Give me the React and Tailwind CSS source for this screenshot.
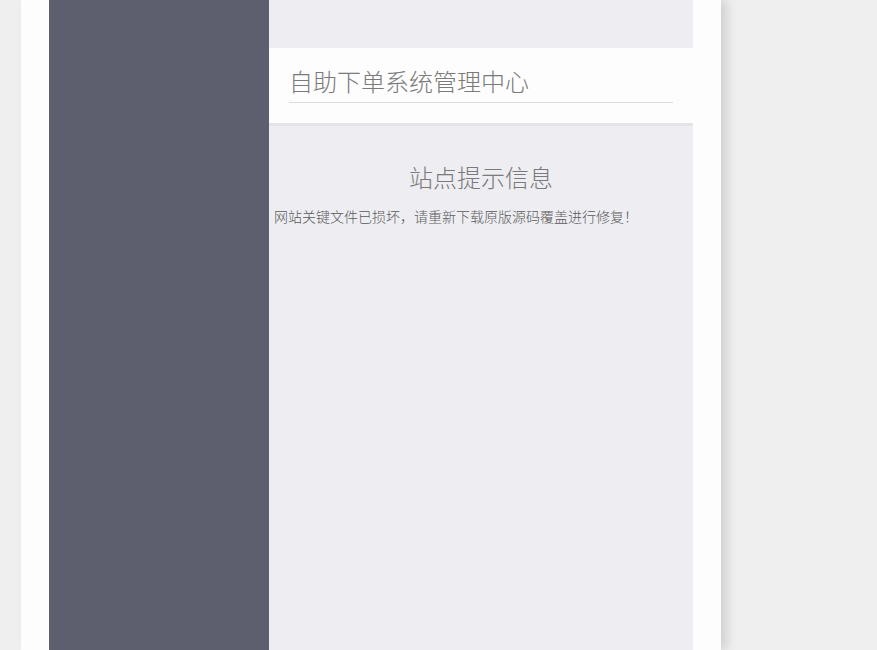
export default function App() {
  return (
    <div
      className="min-h-screen bg-[#efefef] pl-[21px]"
      style={{ fontFamily: '"Liberation Sans", "Noto Sans CJK SC", sans-serif' }}
    >
      <div className="flex min-h-screen w-[700px] bg-[#fdfdfd] px-[28px] shadow-[6px_0_10px_rgba(0,0,0,0.13)]">
        {/* sidebar */}
        <aside className="w-[220px] shrink-0 bg-[#5d5f6f]" />

        {/* main */}
        <main className="flex-1 bg-[#ededf2]">
          <div className="h-[48px]" />
          <header className="bg-[#fdfdfd] px-[20px] pt-[20px] pb-[20px] border-b-[3px] border-[#e3e3e8]">
            <h1 className="border-b border-[#dcdcdc] pb-[4px] text-[24px] leading-[30px] font-light text-[#7a7a7a]">
              自助下单系统管理中心
            </h1>
          </header>
          <section className="pt-[38px]">
            <h2 className="text-center text-[24px] leading-[30px] font-extralight text-[#7a7a7a]">
              站点提示信息
            </h2>
            <p className="mt-[13px] px-[5px] text-[14px] leading-[20px] font-light text-[#5a5a5a]">
              网站关键文件已损坏，请重新下载原版源码覆盖进行修复！
            </p>
          </section>
        </main>
      </div>
    </div>
  );
}
